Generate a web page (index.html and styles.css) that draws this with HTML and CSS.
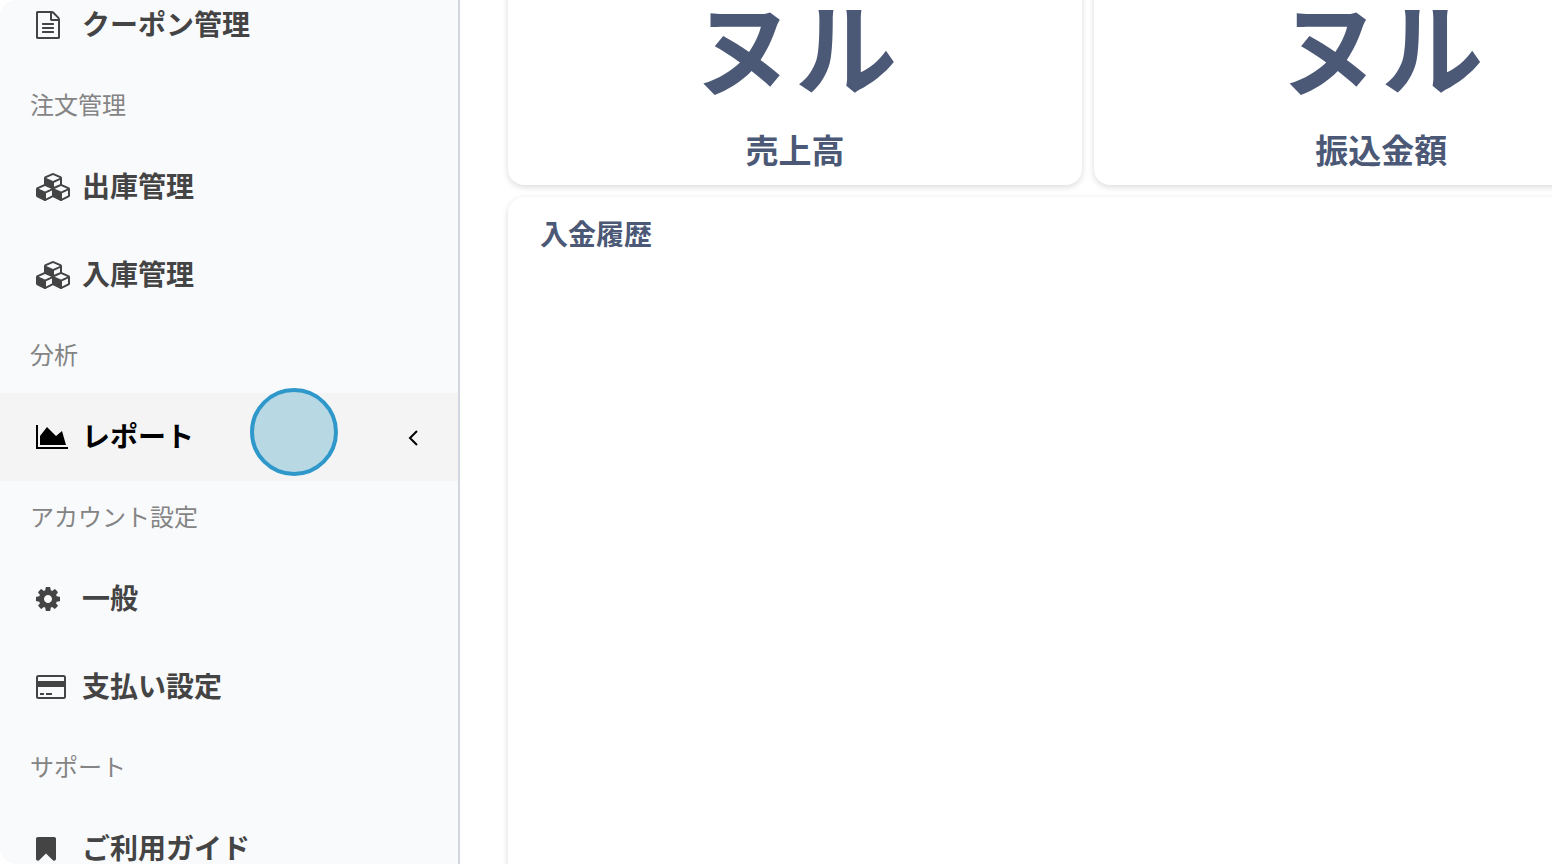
FILE: index.html
```
<!DOCTYPE html>
<html lang="ja">
<head>
<meta charset="UTF-8">
<meta name="viewport" content="width=device-width, initial-scale=1.0">
<title>レポート</title>
<link rel="stylesheet" href="styles.css">
</head>
<body>
<div class="layout">
    <nav class="sidebar">
        <div class="menu">
            <a class="menu-item" href="#">
                <span class="icon"><svg width="24" height="28" viewBox="128 0 1536 1792"><path d="M1596 380q28 28 48 76t20 88v1152q0 40-28 68t-68 28h-1344q-40 0-68-28t-28-68v-1600q0-40 28-68t68-28h896q40 0 88 20t76 48zm-444-244v376h376q-10-29-22-41l-313-313q-12-12-41-22zm384 1528v-1024h-416q-40 0-68-28t-28-68v-416h-768v1536h1280zm-1024-864q0-14 9-23t23-9h704q14 0 23 9t9 23v64q0 14-9 23t-23 9h-704q-14 0-23-9t-9-23v-64zm736 224q14 0 23 9t9 23v64q0 14-9 23t-23 9h-704q-14 0-23-9t-9-23v-64q0-14 9-23t23-9h704zm0 256q14 0 23 9t9 23v64q0 14-9 23t-23 9h-704q-14 0-23-9t-9-23v-64q0-14 9-23t23-9h704z"/></svg></span>
                <span class="menu-text">クーポン管理</span>
            </a>
            <h3 class="menu-title">注文管理</h3>
            <a class="menu-item" href="#">
                <span class="icon"><svg width="34" height="28" viewBox="0 0 2176 1792"><path d="M640 1632l384-192v-314l-384 164v342zm-64-454l404-173-404-173-404 173zm1088 454l384-192v-314l-384 164v342zm-64-454l404-173-404-173-404 173zm-448-293l384-165v-266l-384 164v267zm-64-379l441-189-441-189-441 189zm1088 518v416q0 36-19 67t-52 47l-448 224q-25 14-57 14t-57-14l-448-224q-4-2-7-4-2 2-7 4l-448 224q-25 14-57 14t-57-14l-448-224q-33-16-52-47t-19-67v-416q0-38 21.5-70t56.5-48l434-186v-400q0-38 21.5-70t56.5-48l448-192q23-10 50-10t50 10l448 192q35 16 56.5 48t21.5 70v400l434 186q36 16 57 48t21 70z"/></svg></span>
                <span class="menu-text">出庫管理</span>
            </a>
            <a class="menu-item" href="#">
                <span class="icon"><svg width="34" height="28" viewBox="0 0 2176 1792"><path d="M640 1632l384-192v-314l-384 164v342zm-64-454l404-173-404-173-404 173zm1088 454l384-192v-314l-384 164v342zm-64-454l404-173-404-173-404 173zm-448-293l384-165v-266l-384 164v267zm-64-379l441-189-441-189-441 189zm1088 518v416q0 36-19 67t-52 47l-448 224q-25 14-57 14t-57-14l-448-224q-4-2-7-4-2 2-7 4l-448 224q-25 14-57 14t-57-14l-448-224q-33-16-52-47t-19-67v-416q0-38 21.5-70t56.5-48l434-186v-400q0-38 21.5-70t56.5-48l448-192q23-10 50-10t50 10l448 192q35 16 56.5 48t21.5 70v400l434 186q36 16 57 48t21 70z"/></svg></span>
                <span class="menu-text">入庫管理</span>
            </a>
            <h3 class="menu-title">分析</h3>
            <a class="menu-item active" href="#">
                <span class="icon"><svg width="32" height="24" viewBox="0 128 2048 1536"><path d="M2048 1536v128h-2048v-1536h128v1408h1920zm-384-1024l256 896h-1664v-576l448-576 576 576z"/></svg></span>
                <span class="menu-text">レポート</span>
                <svg class="arrow" width="12" height="18" viewBox="0 0 12 18"><path d="M10 3L3 10l7 7"/></svg>
                <span class="click-mark"></span>
            </a>
            <h3 class="menu-title">アカウント設定</h3>
            <a class="menu-item" href="#">
                <span class="icon"><svg width="24" height="24" viewBox="128 128 1536 1536"><path d="M1152 896q0-106-75-181t-181-75-181 75-75 181 75 181 181 75 181-75 75-181zm512-109v222q0 12-8 23t-20 13l-185 28q-19 54-39 91 35 50 107 138 10 12 10 25t-9 23q-27 37-99 108t-94 71q-12 0-26-9l-138-108q-44 23-91 38-16 136-29 186-7 28-36 28h-222q-14 0-24.5-8.5t-11.5-21.5l-28-184q-49-16-90-37l-141 107q-10 9-25 9-14 0-25-11-126-114-165-168-7-10-7-23 0-12 8-23 15-21 51-66.5t54-70.5q-27-50-41-99l-183-27q-13-2-21-12.5t-8-23.5v-222q0-12 8-23t19-13l186-28q14-46 39-92-40-57-107-138-10-12-10-24 0-10 9-23 26-36 98.500-107.5t94.500-71.5q13 0 26 10l138 107q44-23 91-38 16-136 29-186 7-28 36-28h222q14 0 24.5 8.5t11.5 21.5l28 184q49 16 90 37l142-107q9-9 24-9 13 0 25 10 129 119 165 170 7 8 7 22 0 12-8 23-15 21-51 66.5t-54 70.5q26 50 41 98l183 28q13 2 21 12.5t8 23.5z"/></svg></span>
                <span class="menu-text">一般</span>
            </a>
            <a class="menu-item" href="#">
                <span class="icon"><svg width="30" height="24" viewBox="0 0 30 24"><path fill-rule="evenodd" d="M2.500 0h25A2.500 2.500 0 0 1 30 2.500v19a2.500 2.500 0 0 1-2.500 2.500h-25A2.500 2.500 0 0 1 0 21.500v-19A2.500 2.500 0 0 1 2.500 0zm0 2a.5.5 0 0 0-.5.5V6h26V2.500a.5.5 0 0 0-.5-.5zM2 12v9.500a.5.5 0 0 0 .5.5h25a.5.5 0 0 0 .5-.5V12zM4 18h4v2H4zm6 0h6v2h-6z"/></svg></span>
                <span class="menu-text">支払い設定</span>
            </a>
            <h3 class="menu-title">サポート</h3>
            <a class="menu-item" href="#">
                <span class="icon"><svg width="20" height="24" viewBox="256 128 1280 1536"><path d="M1420 128q23 0 44 9 33 13 52.5 41t19.5 62v1289q0 34-19.5 62t-52.5 41q-19 8-44 8-48 0-83-32l-441-424-441 424q-36 33-83 33-23 0-44-9-33-13-52.5-41t-19.5-62v-1289q0-34 19.5-62t52.5-41q21-9 44-9h1048z"/></svg></span>
                <span class="menu-text">ご利用ガイド</span>
            </a>
        </div>
    </nav>
    <main class="content">
        <div class="cards">
            <section class="card stat">
                <div class="stat-value">ヌル</div>
                <div class="stat-label">売上高</div>
            </section>
            <section class="card stat">
                <div class="stat-value">ヌル</div>
                <div class="stat-label">振込金額</div>
            </section>
            <section class="card history">
                <h2>入金履歴</h2>
            </section>
        </div>
    </main>
</div>
</body>
</html>
```
FILE: styles.css
```
* {
    box-sizing: border-box;
}
body {
    margin: 0;
    font-family: "Noto Sans CJK JP", sans-serif;
    background-color: #fff;
    color: #444;
}
.layout {
    display: flex;
    height: 100vh;
    overflow: hidden;
}

/* sidebar */
.sidebar {
    flex: 0 0 460px;
    overflow: hidden;
    background-color: #f9fafc;
    border-right: 2px solid #d2d6de;
    border-radius: 16px 0 0 16px;
}
/* menu is scrolled down a little */
.menu {
    margin-top: -19px;
}
.menu-item {
    position: relative;
    display: flex;
    align-items: center;
    height: 88px;
    padding: 0 39px 0 36px;
    font-size: 28px;
    line-height: 40px;
    font-weight: 700;
    color: #444;
    text-decoration: none;
}
.menu-item.active {
    background-color: #f4f4f4;
    color: #000;
}
.menu-text {
    padding-bottom: 4px;
}
.icon {
    display: flex;
    width: 46px;
}
.icon svg {
    fill: currentColor;
}
.arrow {
    margin-left: auto;
    fill: none;
    stroke: currentColor;
    stroke-width: 2;
}
.click-mark {
    position: absolute;
    left: 250px;
    top: -5px;
    width: 88px;
    height: 88px;
    border: 4px solid #2f98cb;
    border-radius: 50%;
    background-color: #b8d8e4;
}
.menu-title {
    height: 74px;
    margin: 0;
    padding-left: 30px;
    font-size: 24px;
    line-height: 70px;
    font-weight: 400;
    color: #848484;
}

/* main */
.content {
    flex: 1;
    min-width: 0;
    padding-left: 48px;
}
.cards {
    display: grid;
    grid-template-columns: 55% 55%;
    grid-template-rows: auto 1fr;
    gap: 12px;
    height: calc(100% + 64px);
    margin-top: -32px;
}
.card {
    background-color: #fff;
    border-radius: 16px;
    box-shadow: 0 2px 6px rgba(0, 0, 0, 0.15);
    color: #4b5876;
}
.stat {
    padding: 16px 16px 18px;
    text-align: center;
}
.stat-value {
    margin-bottom: 27px;
    font-size: 102px;
    line-height: 120px;
    font-weight: 700;
}
.stat-label {
    font-size: 33px;
    line-height: 36px;
    font-weight: 700;
}
.history {
    grid-column: 1 / -1;
    padding: 16px 32px;
}
.history h2 {
    margin: 0;
    font-size: 28px;
    line-height: 40px;
    font-weight: 700;
}
```
